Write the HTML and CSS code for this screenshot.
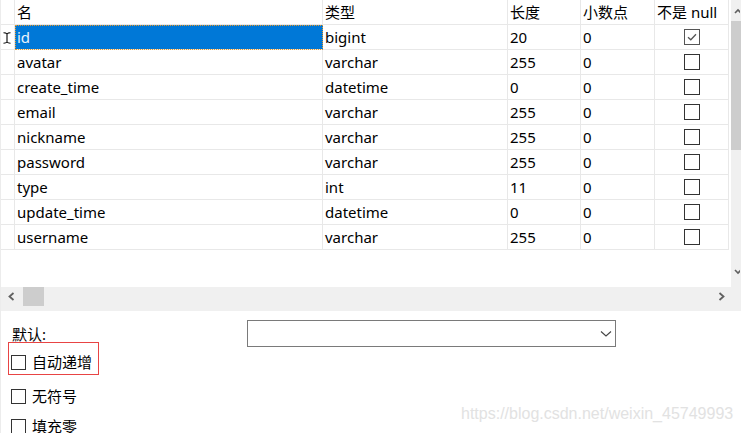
FILE: index.html
```html
<!DOCTYPE html>
<html lang="zh-CN">
<head>
<meta charset="utf-8">
<title>表设计</title>
<link rel="stylesheet" href="styles.css">
</head>
<body>
<div class="page">
  <div class="top">
    <div class="table-area">
      <div class="grid">
        <div class="cell rh"></div>
        <div class="cell">名</div>
        <div class="cell">类型</div>
        <div class="cell">长度</div>
        <div class="cell">小数点</div>
        <div class="cell">不是 null</div>

        <div class="cell rh"><svg class="ibeam" width="8" height="12" viewBox="0 0 8 12"><path d="M0.5 0.8 Q3 0.8 4 2 Q5 0.8 7.5 0.8 M4 2 V10 M0.5 11.2 Q3 11.2 4 10 Q5 11.2 7.5 11.2" fill="none" stroke="#000" stroke-width="1.1"/></svg></div>
        <div class="cell sel">id</div>
        <div class="cell">bigint</div>
        <div class="cell">20</div>
        <div class="cell">0</div>
        <div class="cell chk"><span class="box checked"><svg width="14" height="14" viewBox="0 0 14 14"><path d="M3 7.2 L5.8 9.8 L11 4.3" fill="none" stroke="#555" stroke-width="1.3"/></svg></span></div>

        <div class="cell rh"></div>
        <div class="cell">avatar</div>
        <div class="cell">varchar</div>
        <div class="cell">255</div>
        <div class="cell">0</div>
        <div class="cell chk"><span class="box"></span></div>

        <div class="cell rh"></div>
        <div class="cell">create_time</div>
        <div class="cell">datetime</div>
        <div class="cell">0</div>
        <div class="cell">0</div>
        <div class="cell chk"><span class="box"></span></div>

        <div class="cell rh"></div>
        <div class="cell">email</div>
        <div class="cell">varchar</div>
        <div class="cell">255</div>
        <div class="cell">0</div>
        <div class="cell chk"><span class="box"></span></div>

        <div class="cell rh"></div>
        <div class="cell">nickname</div>
        <div class="cell">varchar</div>
        <div class="cell">255</div>
        <div class="cell">0</div>
        <div class="cell chk"><span class="box"></span></div>

        <div class="cell rh"></div>
        <div class="cell">password</div>
        <div class="cell">varchar</div>
        <div class="cell">255</div>
        <div class="cell">0</div>
        <div class="cell chk"><span class="box"></span></div>

        <div class="cell rh"></div>
        <div class="cell">type</div>
        <div class="cell">int</div>
        <div class="cell">11</div>
        <div class="cell">0</div>
        <div class="cell chk"><span class="box"></span></div>

        <div class="cell rh"></div>
        <div class="cell">update_time</div>
        <div class="cell">datetime</div>
        <div class="cell">0</div>
        <div class="cell">0</div>
        <div class="cell chk"><span class="box"></span></div>

        <div class="cell rh"></div>
        <div class="cell">username</div>
        <div class="cell">varchar</div>
        <div class="cell">255</div>
        <div class="cell">0</div>
        <div class="cell chk"><span class="box"></span></div>
      </div>
    </div>
    <div class="vscroll">
      <div class="v-up"><svg width="9" height="21" viewBox="0 0 9 21"><path d="M4 13 L7 10 L10 13" fill="none" stroke="#606060" stroke-width="1.6"/></svg></div>
      <div class="v-thumb"></div>
      <div class="v-track"><svg width="9" height="10" viewBox="0 0 9 10"><path d="M4 2 L7 5 L10 2" fill="none" stroke="#606060" stroke-width="1.6"/></svg></div>
    </div>
  </div>

  <div class="hscroll">
    <div class="h-left"><svg width="22" height="19" viewBox="0 0 22 19"><path d="M12.5 6 L8.5 9.5 L12.5 13" fill="none" stroke="#606060" stroke-width="1.8"/></svg></div>
    <div class="h-thumb"></div>
    <div class="h-track"></div>
    <div class="h-right"><svg width="22" height="19" viewBox="0 0 22 19"><path d="M3.5 6 L7.5 9.5 L3.5 13" fill="none" stroke="#606060" stroke-width="1.8"/></svg></div>
  </div>

  <div class="panel">
    <div class="default-row">
      <span class="label">默认:</span>
      <div class="select"><svg width="12" height="8" viewBox="0 0 12 8"><path d="M1 1.5 L6 6 L11 1.5" fill="none" stroke="#444" stroke-width="1.1"/></svg></div>
    </div>
    <div class="option highlight"><span class="box sm"></span><span class="opt-text">自动递增</span></div>
    <div class="option o2"><span class="box sm"></span><span class="opt-text">无符号</span></div>
    <div class="option o3"><span class="box sm"></span><span class="opt-text">填充零</span></div>
  </div>

  <div class="watermark">https://blog.csdn.net/weixin_45749993</div>
</div>
</body>
</html>
```

FILE: styles.css
```css
* { box-sizing: border-box; }

body {
  margin: 0;
  background: #ffffff;
  font-family: "Noto Sans", "Noto Sans CJK SC", sans-serif;
  font-size: 15px;
  color: #000000;
}

.page {
  width: 741px;
  height: 433px;
  overflow: hidden;
  position: relative;
  border-left: 1px solid #ececec;
}

.top {
  display: flex;
  height: 287px;
}

.table-area {
  width: 731px;
  background: #ffffff;
  border-bottom-right-radius: 3px;
}

.grid {
  display: grid;
  grid-template-columns: 14px 308px 185px 73px 74px 74px;
  grid-auto-rows: 25px;
}

.cell {
  border-right: 1px solid #e8e8e8;
  border-bottom: 1px solid #e8e8e8;
  padding-left: 2px;
  line-height: 24px;
  white-space: nowrap;
  overflow: hidden;
}

.rh {
  padding: 0;
  display: flex;
  align-items: center;
  justify-content: center;
}

.ibeam { margin-left: -2px; margin-top: 1px; }

.sel {
  background: #0078d7;
  color: #eaf3fc;
  outline: 1px dotted #e89a2c;
  outline-offset: -1px;
  border-right-color: #0078d7;
}

.chk {
  display: flex;
  align-items: center;
  justify-content: center;
  padding-left: 0;
}

.box {
  display: inline-flex;
  width: 16px;
  height: 16px;
  border: 1px solid #333333;
  background: #ffffff;
  align-items: center;
  justify-content: center;
}

.box.checked { border-color: #555555; }

.box.sm {
  width: 15px;
  height: 15px;
}

.vscroll {
  width: 10px;
  background: #f0f0f0;
  display: flex;
  flex-direction: column;
  overflow: hidden;
}

.v-up { height: 21px; }
.v-up svg, .v-track svg { display: block; }
.v-thumb { height: 129px; background: #cdcdcd; }
.v-track {
  flex: 1;
  display: flex;
  align-items: flex-end;
  padding-bottom: 9px;
}

.hscroll {
  height: 24px;
  background: #f0f0f0;
  display: flex;
  align-items: flex-start;
}

.h-left, .h-right { width: 22px; height: 19px; }
.h-left svg, .h-right svg { display: block; }
.h-thumb { width: 21px; height: 19px; background: #cdcdcd; }
.h-track { flex: 1; }
.h-right { margin-right: 3px; width: 22px; }

.panel {
  padding-left: 10px;
  display: flex;
  flex-direction: column;
  align-items: flex-start;
}

.default-row {
  display: flex;
  align-items: center;
  margin-top: 9px;
  height: 27px;
}

.label {
  width: 236px;
  padding-left: 1px;
  line-height: 20px;
}

.select {
  width: 369px;
  height: 27px;
  border: 1px solid #7a7a7a;
  background: #ffffff;
  display: flex;
  align-items: center;
  justify-content: flex-end;
  padding-right: 3px;
}

.option {
  display: flex;
  align-items: center;
  gap: 6px;
  line-height: 16px;
}

.highlight {
  margin-top: -5px;
  margin-left: -3px;
  width: 91px;
  height: 33px;
  border: 1px solid #e84444;
  padding: 0 0 4px 2px;
  align-items: flex-end;
}

.highlight .box { margin-bottom: 0; }

.o2 { margin-top: 13px; }
.o3 { margin-top: 14px; }

.opt-text { line-height: 16px; }

.watermark {
  position: absolute;
  left: 460px;
  top: 405px;
  font-family: "Liberation Sans", Arial, sans-serif;
  font-size: 16px;
  line-height: 18px;
  color: #e2e2e2;
  white-space: nowrap;
}
```
